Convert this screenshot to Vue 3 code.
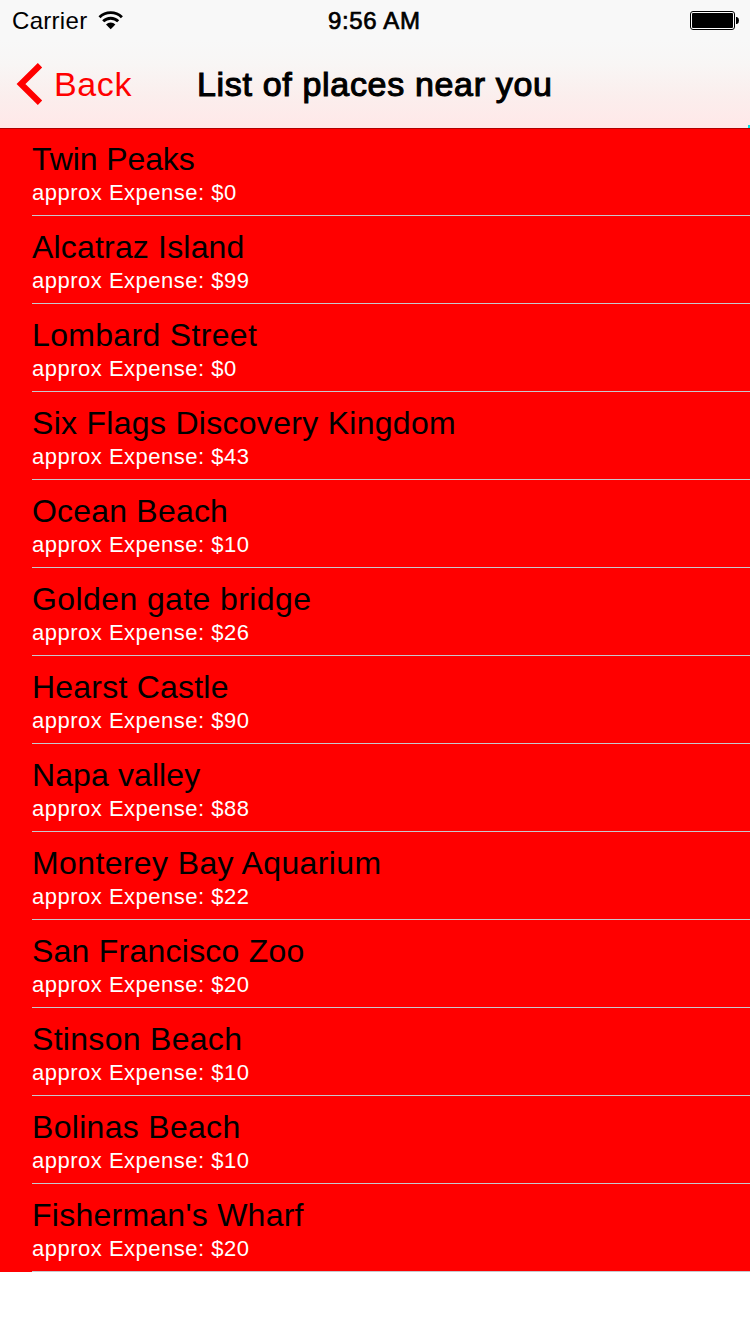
<script setup>
// tracking: letter spacing of the place name, in pixels
const places = [
  { name: 'Twin Peaks', cost: 0, tracking: -0.1 },
  { name: 'Alcatraz Island', cost: 99, tracking: 0.18 },
  { name: 'Lombard Street', cost: 0, tracking: 0.33 },
  { name: 'Six Flags Discovery Kingdom', cost: 43, tracking: 0.29 },
  { name: 'Ocean Beach', cost: 10, tracking: 0.2 },
  { name: 'Golden gate bridge', cost: 26, tracking: 0.4 },
  { name: 'Hearst Castle', cost: 90, tracking: 0.22 },
  { name: 'Napa valley', cost: 88, tracking: 0.1 },
  { name: 'Monterey Bay Aquarium', cost: 22, tracking: 0.38 },
  { name: 'San Francisco Zoo', cost: 20, tracking: 0.24 },
  { name: 'Stinson Beach', cost: 10, tracking: 0.3 },
  { name: 'Bolinas Beach', cost: 10, tracking: 0.3 },
  { name: "Fisherman's Wharf", cost: 20, tracking: 0.25 },
]
</script>

<template>
  <div class="screen">
    <header class="top">
      <div class="status">
        <div class="carrier">
          <span class="carrier-name">Carrier</span>
          <svg class="wifi" width="26" height="20" viewBox="0 0 26 20">
            <g fill="none" stroke="#000" stroke-width="2.9">
              <path d="M1.5 7.2 A16 16 0 0 1 23.9 7.2" />
              <path d="M5.2 11.3 A10.6 10.6 0 0 1 20.2 11.3" />
            </g>
            <path d="M12.7 19.2 L8 14.5 A6.6 6.6 0 0 1 17.4 14.5 Z" fill="#000" />
          </svg>
        </div>
        <span class="time">9:56 AM</span>
        <svg class="battery" width="50" height="20" viewBox="0 0 50 20">
          <rect x="0.5" y="1.5" width="44" height="18" rx="2.5" fill="#fff" stroke="#000" />
          <rect x="2" y="3" width="41" height="15" rx="1" fill="#000" />
          <path d="M46 7 H47 Q49 7.8 49 10.5 Q49 13.2 47 14 H46 Z" fill="#000" />
        </svg>
      </div>
      <nav class="nav">
        <div class="back">
          <svg class="chevron" width="27" height="42" viewBox="0 0 27 42">
            <path d="M24 2.3 L5 21 L24 39.7" fill="none" stroke="#f00" stroke-width="6.2" />
          </svg>
          <span class="back-label">Back</span>
        </div>
        <h1 class="title">List of places near you</h1>
      </nav>
      <i class="marker"></i>
    </header>
    <ul class="list">
      <li v-for="p in places" :key="p.name" class="row">
        <span class="name" :style="{ letterSpacing: p.tracking + 'px' }">{{ p.name }}</span>
        <span class="cost">approx Expense: ${{ p.cost }}</span>
      </li>
    </ul>
  </div>
</template>

<style>
body {
  margin: 0;
  background: #fff;
}
</style>

<style scoped>
.screen {
  width: 750px;
  height: 1334px;
  overflow: hidden;
  background: #fff;
  color: #000;
  font-family: "Liberation Sans", Arial, sans-serif;
  white-space: nowrap;
}
.top {
  position: relative;
  height: 128px;
  background: linear-gradient(#f8f8f8 0, #f8f8f8 40px, #f8f6f5 64px, #fbeeed 96px, #ffe8e8 128px);
}
.status {
  display: grid;
  grid-template-columns: 316px auto 1fr;
  height: 40px;
  padding: 0 10px 0 12px;
  font-size: 24px;
  line-height: 40px;
}
.carrier {
  display: flex;
}
.carrier-name {
  width: 86px;
  letter-spacing: 0.3px;
  padding-top: 1px;
}
.wifi {
  margin-top: 10px;
}
.time {
  padding-top: 1px;
  letter-spacing: 0.65px;
  -webkit-text-stroke: 0.7px #000;
}
.battery {
  justify-self: end;
  margin-top: 10px;
}
.nav {
  display: grid;
  grid-template-columns: 197px auto;
  justify-content: start;
  height: 88px;
  font-size: 34px;
  line-height: 88px;
}
.back {
  display: flex;
  color: #f00;
  padding-left: 16px;
}
.chevron {
  margin-top: 23px;
}
.back-label {
  margin-left: 11px;
  letter-spacing: 0.6px;
}
.title {
  margin: 0;
  font-size: 34px;
  font-weight: 400;
  -webkit-text-stroke: 1.1px #000;
  letter-spacing: 0.67px;
}
.marker {
  position: absolute;
  right: 0;
  bottom: 0;
  width: 2px;
  height: 3px;
  background: #00e5e5;
}
.list {
  margin: 0;
  padding: 0;
  list-style: none;
  background: #f00;
  box-shadow: inset 0 1px 0 #b20000;
}
.row {
  display: flex;
  flex-direction: column;
  height: 87px;
  margin-left: 32px;
  border-bottom: 1px solid #c8c7cc;
}
.name {
  margin-top: 13px;
  font-size: 32px;
  line-height: 36px;
}
.cost {
  margin-top: 3px;
  font-size: 22px;
  line-height: 26px;
  letter-spacing: 0.5px;
  color: #fff;
}
</style>
